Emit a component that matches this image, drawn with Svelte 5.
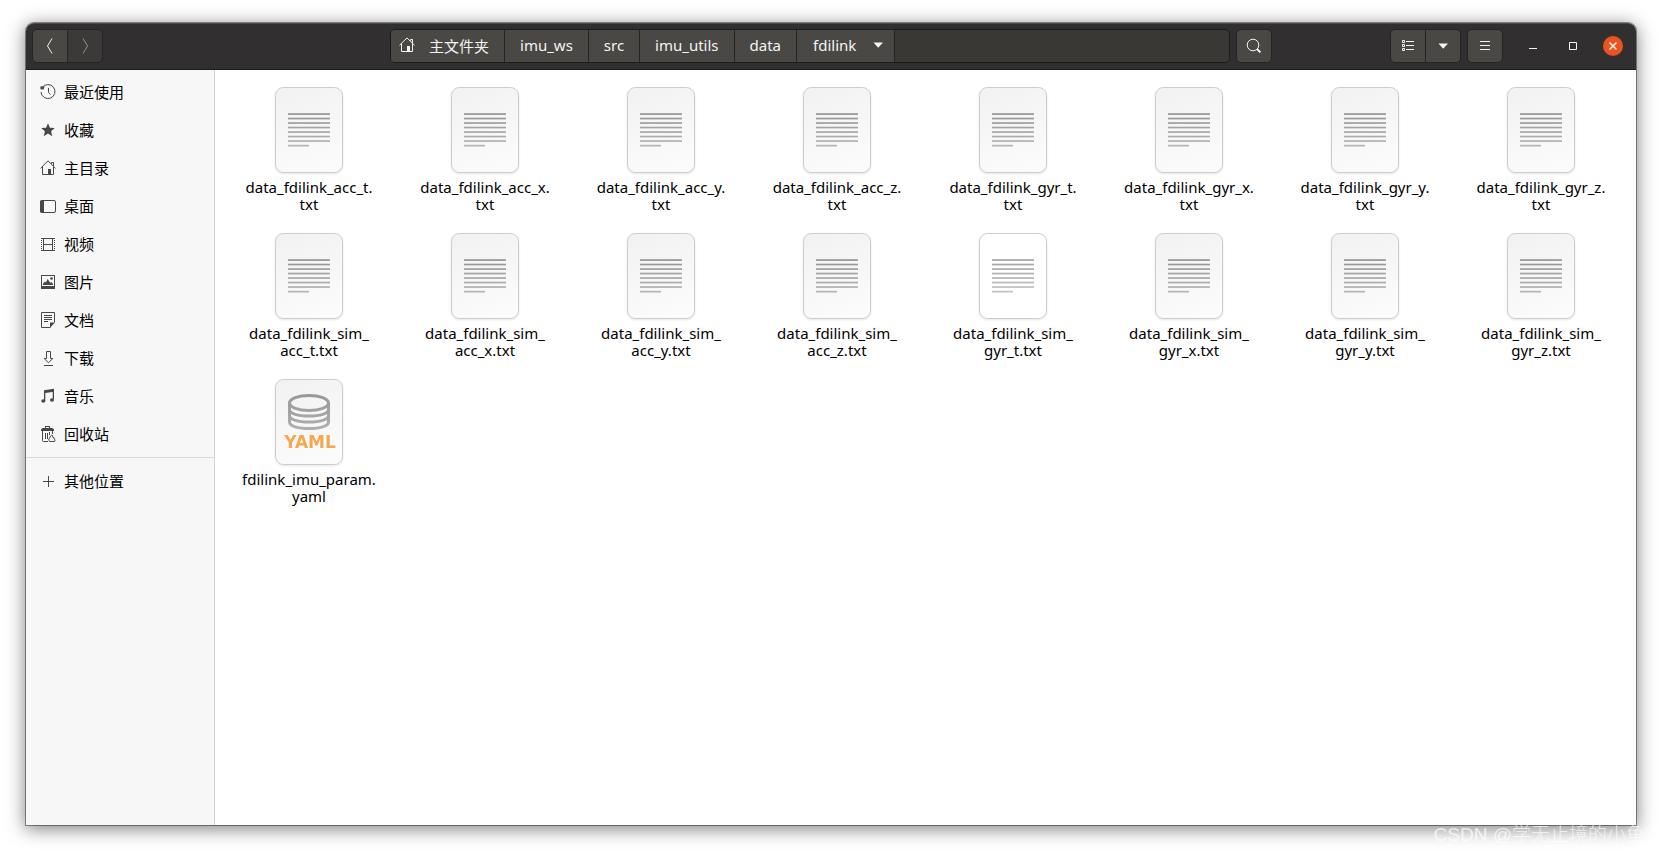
<script>
  let view = $state('grid');
  let selected = $state(-1);

  const places = [
    { name: '最近使用', icon: 'recent' },
    { name: '收藏', icon: 'star' },
    { name: '主目录', icon: 'home' },
    { name: '桌面', icon: 'desktop' },
    { name: '视频', icon: 'video' },
    { name: '图片', icon: 'picture' },
    { name: '文档', icon: 'document' },
    { name: '下载', icon: 'download' },
    { name: '音乐', icon: 'music' },
    { name: '回收站', icon: 'trash' }
  ];

  const crumbs = ['imu_ws', 'src', 'imu_utils', 'data'];

  const files = [];
  for (const sensor of ['acc', 'gyr']) {
    for (const axis of ['t', 'x', 'y', 'z']) {
      files.push({ lines: [`data_fdilink_${sensor}_${axis}.`, 'txt'], type: 'text' });
    }
  }
  for (const sensor of ['acc', 'gyr']) {
    for (const axis of ['t', 'x', 'y', 'z']) {
      const blank = sensor === 'gyr' && axis === 't';
      files.push({ lines: ['data_fdilink_sim_', `${sensor}_${axis}.txt`], type: 'text', blank });
    }
  }
  files.push({ lines: ['fdilink_imu_param.', 'yaml'], type: 'yaml' });
</script>

{#snippet icon(name)}
  <svg class="icon" viewBox="0 0 16 16" width="16" height="16" aria-hidden="true">
    {#if name === 'recent'}
      <path d="M2.2 3.6A7 7 0 1 1 1 8" class="line" />
      <path d="M0.3 2.5 4.6 2.2 3.6 5.6 0.5 5.2Z" class="fill" />
      <path d="M8.5 4v4.5l2 2" class="line" />
    {:else if name === 'star'}
      <path d="M8 1.2l1.9 4.5 4.9.4-3.7 3.2 1.1 4.9L8 11.6l-4.2 2.6 1.1-4.9L1.2 6.1l4.9-.4z" class="fill" />
    {:else if name === 'home'}
      <path d="M.5 8.3 8 .9l7.5 7.4" class="line" />
      <path d="M2.5 6.8v7.7h11V6.8M13.5 6V2.5h-2v1.3" class="line" />
      <path d="M8 9h3v6H8z" class="fill" />
    {:else if name === 'desktop'}
      <rect x=".5" y="2.5" width="15" height="12" rx="1.5" class="line" />
      <path d="M0 4a2 2 0 0 1 2-2h2v13H2a2 2 0 0 1-2-2z" class="fill" />
    {:else if name === 'video'}
      <path d="M1 2.5h14M1 14.5h14M3.5 2v13M12.5 2v13M3.5 8.5h9" class="line" />
      <path d="M1.5 2v13M14.5 2v13" class="line dotted" />
    {:else if name === 'picture'}
      <path d="M1 1h14v14H1zM2 2v10h12V2z" class="fill" fill-rule="evenodd" />
      <path d="M3 11V9.5l2-2 1 1L7.5 5l3 4 1-1L13 10v1z" class="fill" />
      <circle cx="11.5" cy="4.5" r="1.3" class="fill" />
    {:else if name === 'document'}
      <path d="M10.5 15.5h-9v-15h13v10" class="line" />
      <path d="M15 10.5 10 15.8V10.5z" class="fill" />
      <path d="M4 3.5h8M4 5.5h8M4 7.5h8M4 9.5h4" class="line" />
    {:else if name === 'download'}
      <path d="M6.5 1.5h4v7h2.3l-4.3 4.3-4.3-4.3h2.3zM4 15.5h9" class="line" />
    {:else if name === 'music'}
      <path d="M4 2.2 14 .7v3L5.3 5v8H4z" class="fill" />
      <path d="M12.7 2H14v9.5h-1.3z" class="fill" />
      <ellipse cx="3.3" cy="13" rx="2" ry="1.8" class="fill" />
      <ellipse cx="12" cy="12" rx="2" ry="1.8" class="fill" />
    {:else if name === 'trash'}
      <path d="M1 4c0-1 1-2 2-2h2V0h5v2h2c1 0 2 1 2 2v1H1zM6 1v1h3V1z" class="fill" fill-rule="evenodd" />
      <path d="M2.5 5v9.5q0 1 1 1H8M5.5 7v6M7.5 7v6M9.5 6v3M12.5 5v3" class="line" />
      <path d="M9 14.5q-1-1.8.8-2.5.4-2.5 2-3 1 .6.8 2 2.2.4 1.6 2 1.4.6.4 2.5h-5z" class="line" />
    {:else if name === 'plus'}
      <path d="M8.5 3v11M3 8.5h11" class="line" />
    {:else if name === 'back'}
      <path d="M10 .5 5.5 8l4.5 7.5" class="line" />
    {:else if name === 'forward'}
      <path d="M6 .5 10.5 8 6 15.5" class="line" />
    {:else if name === 'search'}
      <circle cx="7" cy="7" r="5.8" class="line" />
      <path d="M11 11l3.4 3.4" class="line thick" />
    {:else if name === 'list'}
      <path d="M2.5 2.5h2v2h-2zM2.5 6.5h2v2h-2zM2.5 10.5h2v2h-2zM6 3.5h8M6 7.5h8M6 11.5h8" class="line" />
    {:else if name === 'caret'}
      <path d="M3.5 5.5H13l-4.8 5.3z" class="fill" />
    {:else if name === 'menu'}
      <path d="M3 3.5h10M3 7.5h10M3 11.5h10" class="line" />
    {:else if name === 'minimize'}
      <path d="M4 10.5h8" class="line" />
    {:else if name === 'maximize'}
      <path d="M4.5 4.5h7v7h-7z" class="line" />
    {:else if name === 'close'}
      <path d="M4.5 4.5l7 7M11.5 4.5l-7 7" class="line bold" />
    {/if}
  </svg>
{/snippet}

{#snippet paper(file)}
  <svg class="paper" viewBox="0 0 68 86" width="68" height="86" aria-hidden="true">
    <rect x=".5" y=".5" width="67" height="85" rx="8" fill={file.blank ? '#ffffff' : 'url(#sheet)'} stroke="#cdcdcd" />
    {#if file.type === 'text'}
      <g fill={file.blank ? 'url(#ink-light)' : 'url(#ink)'}>
        {#each [0, 1, 2, 3, 4, 5, 6] as row}
          <rect x="13" y={26.2 + row * 4.5} width="42" height="1.7" />
        {/each}
        <rect x="13" y="57.8" width="21" height="1.7" />
      </g>
    {:else}
      <g fill="none" stroke="url(#drum)" stroke-width="3">
        <ellipse cx="34" cy="24" rx="19.5" ry="7.5" />
        <path d="M14.5 24v19c0 4.2 8.7 6.5 19.5 6.5s19.5-2.3 19.5-6.5V24" />
        <path d="M14.5 30.5c0 4.2 8.7 6.5 19.5 6.5s19.5-2.3 19.5-6.5" />
        <path d="M14.5 36.5c0 4.2 8.7 6.5 19.5 6.5s19.5-2.3 19.5-6.5" />
      </g>
      <text x="35" y="69" class="badge">YAML</text>
    {/if}
  </svg>
{/snippet}

<svg class="defs" width="0" height="0" aria-hidden="true">
  <defs>
    <linearGradient id="sheet" x1="0.2" y1="0" x2="0.5" y2="1">
      <stop offset="0" stop-color="#f2f2f2" />
      <stop offset="1" stop-color="#fbfbfb" />
    </linearGradient>
    <linearGradient id="ink" gradientUnits="userSpaceOnUse" x1="0" y1="26" x2="0" y2="60">
      <stop offset="0" stop-color="#949494" />
      <stop offset="1" stop-color="#b6b6b6" />
    </linearGradient>
    <linearGradient id="ink-light" gradientUnits="userSpaceOnUse" x1="0" y1="26" x2="0" y2="60">
      <stop offset="0" stop-color="#a2a2a2" />
      <stop offset="1" stop-color="#c4c4c4" />
    </linearGradient>
    <linearGradient id="drum" gradientUnits="userSpaceOnUse" x1="0" y1="16" x2="0" y2="52">
      <stop offset="0" stop-color="#979797" />
      <stop offset="1" stop-color="#b0b0b0" />
    </linearGradient>
  </defs>
</svg>

<div class="screen">
  <div class="window">
    <header class="titlebar">
      <div class="side">
        <div class="linked">
          <button class="tool" aria-label="后退">{@render icon('back')}</button>
          <button class="tool" aria-label="前进" disabled>{@render icon('forward')}</button>
        </div>
      </div>

      <div class="location">
        <nav class="pathbar">
          <button class="crumb home">{@render icon('home')}<span>主文件夹</span></button>
          {#each crumbs as crumb}
            <button class="crumb">{crumb}</button>
          {/each}
          <button class="crumb current">fdilink {@render icon('caret')}</button>
        </nav>
        <button class="tool" aria-label="搜索">{@render icon('search')}</button>
      </div>

      <div class="side end">
        <div class="linked">
          <button class="tool" aria-label="列表视图" onclick={() => (view = view === 'grid' ? 'list' : 'grid')}>{@render icon('list')}</button>
          <button class="tool" aria-label="视图选项">{@render icon('caret')}</button>
        </div>
        <button class="tool" aria-label="菜单">{@render icon('menu')}</button>
        <div class="controls">
          <button aria-label="最小化">{@render icon('minimize')}</button>
          <button aria-label="最大化">{@render icon('maximize')}</button>
          <button class="close" aria-label="关闭">{@render icon('close')}</button>
        </div>
      </div>
    </header>

    <div class="body">
      <aside class="sidebar">
        {#each places as place}
          <button class="place">{@render icon(place.icon)}<span>{place.name}</span></button>
        {/each}
        <hr />
        <button class="place">{@render icon('plus')}<span>其他位置</span></button>
      </aside>

      <main class="files" class:list={view === 'list'}>
        {#each files as file, i}
          <button class="file" class:selected={selected === i} onclick={() => (selected = i)}>
            {@render paper(file)}
            <span class="name">{file.lines[0]}<wbr />{file.lines[1]}</span>
          </button>
        {/each}
      </main>
    </div>
  </div>
  <div class="watermark">CSDN @学无止境的小鱼</div>
</div>

<style>
  :global(body) {
    background: #ffffff;
  }
  button {
    margin: 0;
    padding: 0;
    border: none;
    background: none;
    font: inherit;
    color: inherit;
  }
  .defs {
    position: absolute;
  }
  .screen {
    position: relative;
    box-sizing: border-box;
    height: 100vh;
    padding: 23px 26px 29px;
    overflow: hidden;
    font-family: "Noto Sans", "Noto Sans CJK SC", sans-serif;
    font-size: 15px;
  }
  .window {
    display: flex;
    flex-direction: column;
    height: 100%;
    border-radius: 8px 8px 0 0;
    background: #ffffff;
    box-shadow: 0 0 0 1px rgba(0, 0, 0, 0.4), 0 3px 18px 1px rgba(0, 0, 0, 0.5);
  }

  .icon {
    display: block;
    flex: none;
  }
  .icon .line {
    fill: none;
    stroke: currentColor;
    stroke-width: 1;
  }
  .icon .bold {
    stroke-width: 1.5;
  }
  .icon .thick {
    stroke-width: 2;
  }
  .icon .dotted {
    stroke-dasharray: 1 1;
  }
  .icon .fill {
    fill: currentColor;
  }

  /* title bar */
  .titlebar {
    display: flex;
    align-items: center;
    box-sizing: border-box;
    height: 47px;
    padding: 0 6px 1px;
    border-top: 1px solid #4d4b4b;
    border-bottom: 1px solid #1c1b1b;
    border-radius: 8px 8px 0 0;
    background: #322f30;
    color: #f4f4f2;
  }
  .side {
    display: flex;
    flex: 1;
    gap: 6px;
  }
  .side.end {
    justify-content: flex-end;
  }
  .linked {
    display: flex;
  }
  .tool {
    display: flex;
    align-items: center;
    justify-content: center;
    box-sizing: border-box;
    width: 36px;
    height: 34px;
    border: 1px solid #252323;
    border-radius: 5px;
    background: #4a4845;
  }
  .tool:disabled {
    background: #3b3a38;
    color: #92918f;
  }
  .linked .tool:first-child {
    border-radius: 5px 0 0 5px;
  }
  .linked .tool:last-child {
    width: 35px;
    border-left: none;
    border-radius: 0 5px 5px 0;
  }
  .location {
    display: flex;
    flex: 0 1 882px;
    gap: 6px;
  }
  .pathbar {
    display: flex;
    flex: 1;
    box-sizing: border-box;
    height: 34px;
    border: 1px solid #1c1b1b;
    border-radius: 5px;
    background: #3a3835;
    overflow: hidden;
  }
  .crumb {
    display: flex;
    align-items: center;
    padding: 0 15px 2px;
    border-right: 1px solid #252323;
    background: #4a4845;
  }
  .crumb.home {
    gap: 14px;
    padding-left: 8px;
  }
  .crumb.current {
    gap: 14px;
    padding-left: 16px;
    padding-right: 8px;
  }
  .controls {
    display: flex;
    align-items: center;
    gap: 20px;
    padding: 0 7px 0 14px;
  }
  .controls button {
    display: flex;
    align-items: center;
    justify-content: center;
    width: 20px;
    height: 20px;
    border-radius: 50%;
  }
  .controls .close {
    background: #e95420;
  }

  /* sidebar */
  .body {
    display: flex;
    flex: 1;
    min-height: 0;
  }
  .sidebar {
    box-sizing: border-box;
    width: 189px;
    padding-top: 3px;
    border-right: 1px solid #d5d5d5;
    background: #f7f7f7;
  }
  .place {
    display: flex;
    align-items: center;
    gap: 8px;
    width: 100%;
    height: 38px;
    padding-left: 14px;
    color: #000000;
  }
  .place .icon {
    color: #474747;
  }
  .place span {
    padding-bottom: 2px;
  }
  .place:hover {
    background: #ececec;
  }
  .sidebar hr {
    margin: 4px 0;
    border: none;
    border-top: 1px solid #d9d9d9;
  }

  /* file grid */
  .files {
    display: grid;
    flex: 1;
    grid-template-columns: repeat(auto-fill, minmax(160px, 1fr));
    grid-auto-rows: 126px;
    align-content: start;
    row-gap: 20px;
    padding: 17px 7px 0 6px;
    overflow: auto;
  }
  .files.list {
    grid-template-columns: 1fr;
  }
  .file {
    display: flex;
    flex-direction: column;
    align-items: center;
    gap: 6px;
    color: #000000;
  }
  .paper {
    display: block;
    filter: drop-shadow(0 1px 1px rgba(0, 0, 0, 0.1));
  }
  .badge {
    font-family: "DejaVu Sans", sans-serif;
    font-size: 17px;
    font-weight: 700;
    text-anchor: middle;
    fill: #f3a951;
  }
  .name {
    max-width: 140px;
    line-height: 17px;
    text-align: center;
  }
  .selected .name {
    border-radius: 3px;
    background: #e95420;
    color: #ffffff;
  }

  .watermark {
    position: absolute;
    right: 17px;
    bottom: 8px;
    font-family: "Liberation Sans", "Noto Sans CJK SC", sans-serif;
    font-size: 19px;
    font-weight: 300;
    color: rgba(255, 255, 255, 0.7);
    white-space: nowrap;
  }
</style>
